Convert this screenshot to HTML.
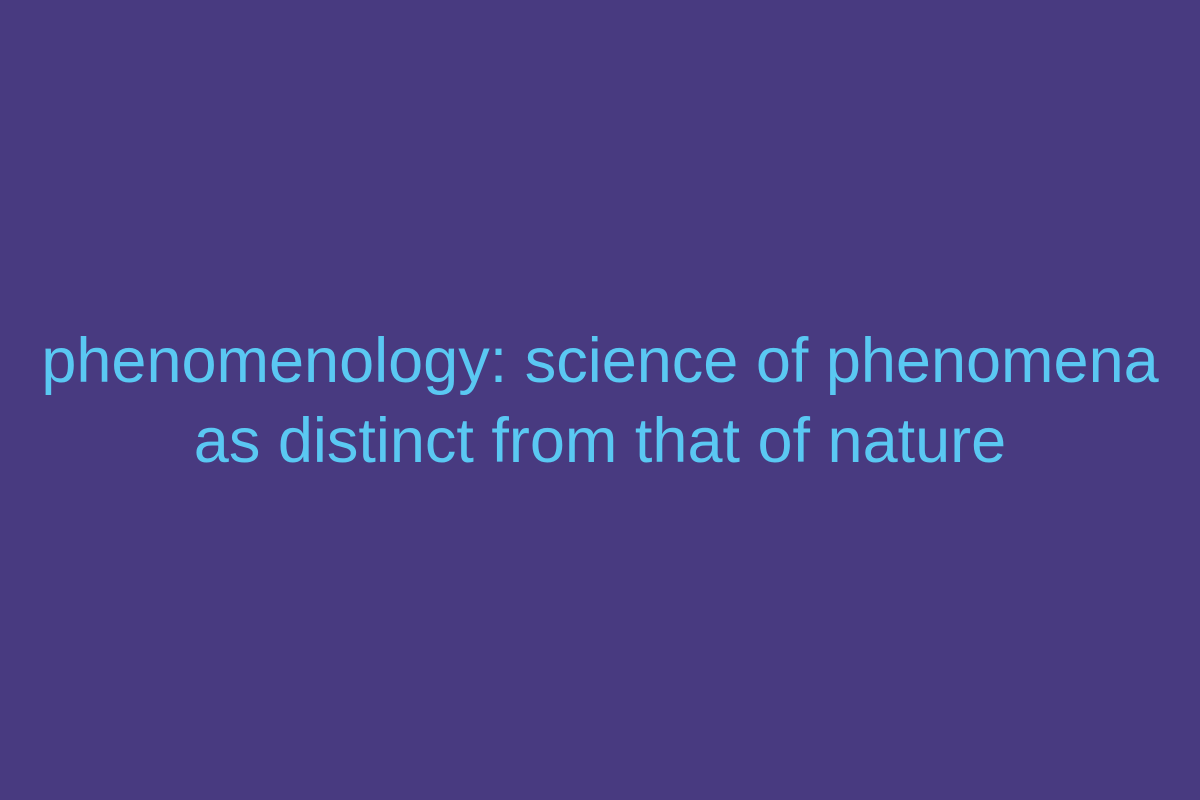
<!DOCTYPE html>
<html><head><meta charset="utf-8"><style>
html,body{margin:0;padding:0;width:1200px;height:800px;background:#483a80;overflow:hidden}
.t{position:absolute;left:0;top:321px;width:1200px;text-align:center;font-family:"Liberation Sans",sans-serif;font-size:63px;line-height:80px;color:#5ac8f2}
</style></head><body>
<div class="t">phenomenology: science of phenomena<br>as distinct from that of nature</div>
</body></html>
